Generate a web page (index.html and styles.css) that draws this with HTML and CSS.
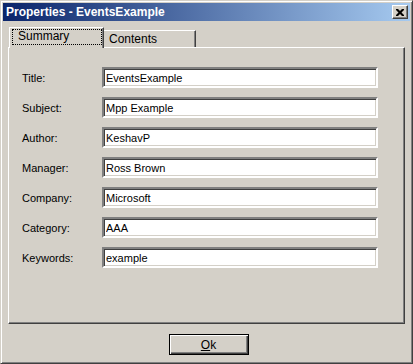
FILE: index.html
```html
<!DOCTYPE html>
<html lang="en">
<head>
    <meta charset="UTF-8">
    <title>Properties - EventsExample</title>
    <link rel="stylesheet" href="styles.css">
</head>
<body>
    <div class="window">
        <div class="titlebar">
            <span class="title">Properties - EventsExample</span>
            <button class="close" aria-label="Close">
                <svg width="8" height="7" viewBox="0 0 8 7">
                    <path d="M0 0h2l2 2 2-2h2v1l-2.5 2.5L8 6v1H6L4 5 2 7H0V6l2.5-2.5L0 1z" fill="#000"/>
                </svg>
            </button>
        </div>
        <div class="body">
            <div class="tabs">
                <div class="tab active"><span class="focus">Summary</span></div>
                <div class="tab">Contents</div>
            </div>
            <div class="panel">
                <div class="row"><label>Title:</label><input type="text" value="EventsExample"></div>
                <div class="row"><label>Subject:</label><input type="text" value="Mpp Example"></div>
                <div class="row"><label>Author:</label><input type="text" value="KeshavP"></div>
                <div class="row"><label>Manager:</label><input type="text" value="Ross Brown"></div>
                <div class="row"><label>Company:</label><input type="text" value="Microsoft"></div>
                <div class="row"><label>Category:</label><input type="text" value="AAA"></div>
                <div class="row"><label>Keywords:</label><input type="text" value="example"></div>
            </div>
            <div class="buttons">
                <button class="ok"><u>O</u>k</button>
            </div>
        </div>
    </div>
</body>
</html>
```

FILE: styles.css
```css
html, body { margin: 0; padding: 0; background: #d4d0c8; }
body { font-family: "Liberation Sans", Arial, sans-serif; font-size: 11px; color: #000; }

.window {
    width: 413px; height: 364px; box-sizing: border-box;
    background: #d4d0c8;
    border: 1px solid; border-color: #d4d0c8 #404040 #404040 #d4d0c8;
    box-shadow: inset 1px 1px #fff, inset -1px -1px #808080;
    padding: 2px;
    display: flex; flex-direction: column;
}

.titlebar {
    height: 18px; display: flex; align-items: center; justify-content: space-between;
    background: linear-gradient(to right, #0a246a, #a6caf0);
    padding: 0 2px 0 3px;
}
.title { color: #fff; font-weight: bold; font-size: 12px; }
.close {
    width: 16px; height: 14px; padding: 0; margin: 0;
    background: #d4d0c8; border: 1px solid; border-color: #fff #404040 #404040 #fff;
    box-shadow: inset -1px -1px #808080;
    display: flex; align-items: center; justify-content: center;
}

.body { flex: 1; padding: 6px 5px 0 5px; display: flex; flex-direction: column; }

.tabs { display: flex; align-items: flex-end; height: 20px; margin-left: 1px; }
.tab {
    height: 17px; box-sizing: border-box; padding: 1px 6px 0 6px;
    border: 1px solid; border-bottom: none; border-color: #fff #404040 transparent #fff;
    box-shadow: inset -1px 0 #808080;
    font-size: 12px; width: 94px;
}
.tab.active {
    height: 21px; width: 95px; padding: 1px 1px 0 2px; margin-right: -2px;
    position: relative; z-index: 1; background: #d4d0c8;
    margin-bottom: -1px;
}
.focus { display: block; border: 1px dotted #000; height: 14px; padding-left: 5px; line-height: 13px; }

.panel {
    width: 397px; height: 277px; box-sizing: border-box;
    border: 1px solid; border-color: #fff #404040 #404040 #fff;
    box-shadow: inset -1px -1px #808080;
    padding: 19px 0 0 13px;
    display: flex; flex-direction: column; gap: 9px;
}
.row { display: flex; align-items: center; height: 21px; }
.row label { width: 80px; font-size: 11px; }
.row input {
    width: 276px; height: 21px; box-sizing: border-box; margin: 0;
    font-family: "Liberation Sans", Arial, sans-serif; font-size: 11px;
    padding: 1px 2px 0 2px; background: #fff; outline: none;
    border: 2px solid; border-color: #808080 #fff #fff #808080;
    box-shadow: inset 1px 1px #404040, inset -1px -1px #d4d0c8;
}

.buttons { display: flex; justify-content: center; padding: 10px 0 0 4px; }
.ok {
    width: 80px; height: 21px; box-sizing: border-box; padding: 0;
    background: #d4d0c8; font-family: "Liberation Sans", Arial, sans-serif; font-size: 12px;
    border: 1px solid #000;
    box-shadow: inset 1px 1px #fff, inset -1px -1px #404040, inset -2px -2px #808080;
}
```
